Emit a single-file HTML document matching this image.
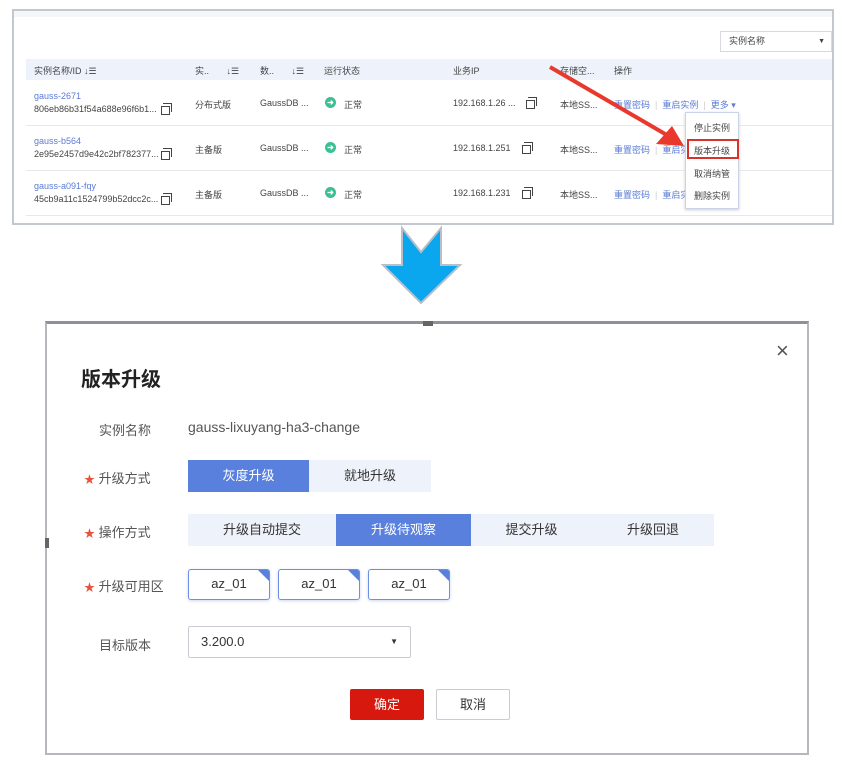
<!DOCTYPE html>
<html><head><meta charset="utf-8"><style>
*{margin:0;padding:0;box-sizing:border-box}
body{width:846px;height:764px;background:#fff;position:relative;font-family:"Liberation Sans","Noto Sans CJK SC",sans-serif;overflow:hidden;color:#333}
.a{position:absolute;white-space:nowrap}
.s{font-size:9px;color:#444}
.lk{color:#5b7bd5}
.cp{width:9px;height:9px;border:1.5px solid #444;position:absolute;background:#fff}
.cp:before{content:"";position:absolute;left:1px;top:-4px;width:8px;height:8px;border-top:1.5px solid #444;border-right:1.5px solid #444}
.ok{width:11px;height:11px;border-radius:50%;background:#3bbf95;position:absolute;color:#fff;font-size:8px;line-height:11px;text-align:center;font-weight:bold}
.lbl{font-size:13px;color:#555}
.st{color:#e8533a;font-size:11px}
.seg{position:absolute;height:32px;line-height:32px;text-align:center;font-size:13px;background:#eef2fa;color:#333}
.on{background:#5a80de;color:#fff}
.az{position:absolute;width:82px;height:31px;border:1.5px solid #6d8fe3;border-radius:3px;font-size:13px;text-align:center;line-height:28px;background:#fff;box-shadow:0 1px 3px #cdd8f3;overflow:hidden}
.az:after{content:"";position:absolute;right:-1px;top:-1px;border-top:13px solid #5a80de;border-left:13px solid transparent}
</style></head><body>
<div class="a" style="left:12px;top:9px;width:822px;height:216px;border:2px solid #c3c7ce;background:#fff"></div>
<div class="a" style="left:14px;top:11px;width:818px;height:6px;background:#f4f6fa"></div>
<div class="a s" style="left:720px;top:31px;width:112px;height:21px;border:1px solid #d6d9de;line-height:19px;padding-left:8px">实例名称<span style="position:absolute;right:6px;font-size:7px">▼</span></div>
<div class="a" style="left:26px;top:59px;width:806px;height:21px;background:#eef3fb"></div>
<div class="a s" style="left:34px;top:64px">实例名称/ID ↓☰</div>
<div class="a s" style="left:195px;top:64px">实..&nbsp;&nbsp;&nbsp;&nbsp;&nbsp;&nbsp;&nbsp;↓☰</div>
<div class="a s" style="left:260px;top:64px">数..&nbsp;&nbsp;&nbsp;&nbsp;&nbsp;&nbsp;&nbsp;↓☰</div>
<div class="a s" style="left:324px;top:64px">运行状态</div>
<div class="a s" style="left:453px;top:64px">业务IP</div>
<div class="a s" style="left:560px;top:64px">存储空...</div>
<div class="a s" style="left:614px;top:64px">操作</div>
<div class="a" style="left:26px;top:125px;width:806px;height:1px;background:#e6e8ec"></div>
<div class="a" style="left:26px;top:170px;width:806px;height:1px;background:#e6e8ec"></div>
<div class="a" style="left:26px;top:215px;width:806px;height:1px;background:#e6e8ec"></div>

<div class="a s lk" style="left:34px;top:91px">gauss-2671</div>
<div class="a s" style="left:34px;top:104px">806eb86b31f54a688e96f6b1...</div>
<div class="cp" style="left:161px;top:106px"></div>
<div class="a s" style="left:195px;top:98px">分布式版</div>
<div class="a s" style="left:260px;top:98px">GaussDB ...</div>
<div class="ok" style="left:325px;top:97px">➜</div><div class="a s" style="left:344px;top:98px">正常</div>
<div class="a s" style="left:453px;top:98px">192.168.1.26 ...</div>
<div class="cp" style="left:526px;top:100px"></div>
<div class="a s" style="left:560px;top:98px">本地SS...</div>
<div class="a s lk" style="left:614px;top:98px">重置密码 <span style="color:#ccc">&nbsp;|&nbsp;</span> 重启实例 <span style="color:#ccc">&nbsp;|&nbsp;</span> 更多 ▾</div>

<div class="a s lk" style="left:34px;top:136px">gauss-b564</div>
<div class="a s" style="left:34px;top:149px">2e95e2457d9e42c2bf782377...</div>
<div class="cp" style="left:161px;top:151px"></div>
<div class="a s" style="left:195px;top:143px">主备版</div>
<div class="a s" style="left:260px;top:143px">GaussDB ...</div>
<div class="ok" style="left:325px;top:142px">➜</div><div class="a s" style="left:344px;top:143px">正常</div>
<div class="a s" style="left:453px;top:143px">192.168.1.251</div>
<div class="cp" style="left:522px;top:145px"></div>
<div class="a s" style="left:560px;top:143px">本地SS...</div>
<div class="a s lk" style="left:614px;top:143px">重置密码 <span style="color:#ccc">&nbsp;|&nbsp;</span> 重启实</div>

<div class="a s lk" style="left:34px;top:181px">gauss-a091-fqy</div>
<div class="a s" style="left:34px;top:194px">45cb9a11c1524799b52dcc2c...</div>
<div class="cp" style="left:161px;top:196px"></div>
<div class="a s" style="left:195px;top:188px">主备版</div>
<div class="a s" style="left:260px;top:188px">GaussDB ...</div>
<div class="ok" style="left:325px;top:187px">➜</div><div class="a s" style="left:344px;top:188px">正常</div>
<div class="a s" style="left:453px;top:188px">192.168.1.231</div>
<div class="cp" style="left:522px;top:190px"></div>
<div class="a s" style="left:560px;top:188px">本地SS...</div>
<div class="a s lk" style="left:614px;top:188px">重置密码 <span style="color:#ccc">&nbsp;|&nbsp;</span> 重启实</div>

<div class="a" style="left:685px;top:112px;width:54px;height:97px;border:1px solid #c9d3ea;background:#fff;box-shadow:0 1px 3px #ccc"></div>
<div class="a s" style="left:694px;top:121px">停止实例</div>
<div class="a" style="left:687px;top:139px;width:52px;height:20px;border:2px solid #d9322a"></div>
<div class="a s" style="left:694px;top:144px">版本升级</div>
<div class="a s" style="left:694px;top:167px">取消纳管</div>
<div class="a s" style="left:694px;top:189px">删除实例</div>

<svg class="a" style="left:0;top:0" width="846" height="330">
<line x1="550" y1="67" x2="672" y2="138" stroke="#e8392c" stroke-width="4"/>
<polygon points="684,146 656,144 672,126" fill="#e8392c"/>
<polygon points="402,228 421,252 441,228 441,265 460,265 421,303 383,265 402,265" fill="#0aa6ee" stroke="#b8bfc8" stroke-width="2"/>
</svg>

<div class="a" style="left:45px;top:321px;width:764px;height:434px;border:2px solid #b5b8bd;border-top:3px solid #8e9196;background:#fff"></div>
<div class="a" style="left:423px;top:321px;width:10px;height:5px;background:#666"></div>
<div class="a" style="left:45px;top:538px;width:4px;height:10px;background:#666"></div>
<div class="a" style="left:776px;top:338px;font-size:22px;color:#555">×</div>
<div class="a" style="left:81px;top:363px;font-size:20px;font-weight:bold;color:#222">版本升级</div>

<div class="a lbl" style="left:99px;top:420px">实例名称</div>
<div class="a" style="left:188px;top:419px;font-size:14px;color:#555">gauss-lixuyang-ha3-change</div>

<div class="a lbl" style="left:84px;top:468px"><span class="st">★</span> 升级方式</div>
<div class="seg on" style="left:188px;top:460px;width:121px">灰度升级</div>
<div class="seg" style="left:309px;top:460px;width:122px">就地升级</div>

<div class="a lbl" style="left:84px;top:522px"><span class="st">★</span> 操作方式</div>
<div class="seg" style="left:188px;top:514px;width:148px">升级自动提交</div>
<div class="seg on" style="left:336px;top:514px;width:135px">升级待观察</div>
<div class="seg" style="left:471px;top:514px;width:121px">提交升级</div>
<div class="seg" style="left:592px;top:514px;width:122px">升级回退</div>

<div class="a lbl" style="left:84px;top:576px"><span class="st">★</span> 升级可用区</div>
<div class="az" style="left:188px;top:569px">az_01</div>
<div class="az" style="left:278px;top:569px">az_01</div>
<div class="az" style="left:368px;top:569px">az_01</div>

<div class="a lbl" style="left:99px;top:635px">目标版本</div>
<div class="a" style="left:188px;top:626px;width:223px;height:32px;border:1px solid #c9ccd1;border-radius:2px;font-size:13px;line-height:30px;padding-left:12px;color:#333">3.200.0<span style="position:absolute;right:12px;font-size:8px">▼</span></div>

<div class="a" style="left:350px;top:689px;width:74px;height:31px;background:#d7180e;border-radius:2px;color:#fff;font-size:13px;line-height:31px;text-align:center">确定</div>
<div class="a" style="left:436px;top:689px;width:74px;height:31px;border:1px solid #c9ccd1;border-radius:2px;font-size:13px;line-height:29px;text-align:center;color:#333">取消</div>
</body></html>
